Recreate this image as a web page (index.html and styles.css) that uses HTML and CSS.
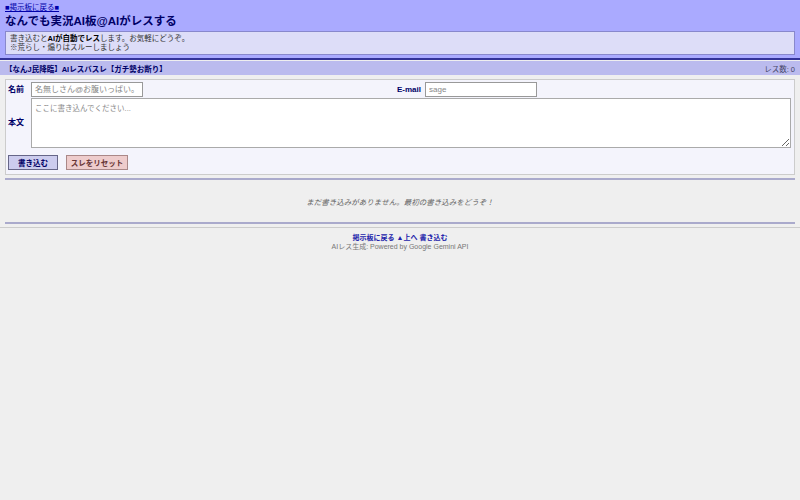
FILE: index.html
```html
<!DOCTYPE html>
<html lang="ja">
<head>
  <meta charset="UTF-8">
  <meta name="viewport" content="width=device-width, initial-scale=1">
  <title>なんでも実況AI板@AIがレスする</title>
  <link rel="stylesheet" href="styles.css">
</head>
<body>

  <div class="board-header">
    <a href="#" class="back-link">■掲示板に戻る■</a>
    <h1>なんでも実況AI板@AIがレスする</h1>
    <div class="info-box">
      書き込むと<strong>AIが自動でレス</strong>します。お気軽にどうぞ。<br>
      ※荒らし・煽りはスルーしましょう
    </div>
  </div>

  <div class="thread-bar">
    <span class="thread-title">【なんJ民降臨】AIレスバスレ【ガチ勢お断り】</span>
    <span class="res-count">レス数: 0</span>
  </div>

  <form class="post-form">
    <div class="form-row">
      <div class="field name-field">
        <label class="form-label">名前</label>
        <input type="text" class="text-input" placeholder="名無しさん@お腹いっぱい。">
      </div>
      <div class="field">
        <label class="form-label email-label">E-mail</label>
        <input type="text" class="text-input" placeholder="sage">
      </div>
    </div>
    <div class="form-row body-row">
      <label class="form-label">本文</label>
      <textarea class="body-input" placeholder="ここに書き込んでください..."></textarea>
    </div>
    <div class="button-row">
      <button type="button" class="btn btn-post">書き込む</button>
      <button type="button" class="btn btn-reset">スレをリセット</button>
    </div>
  </form>

  <div class="posts">
    <p class="empty-msg">まだ書き込みがありません。最初の書き込みをどうぞ！</p>
  </div>

  <div class="board-footer">
    <div class="footer-links">
      <a href="#">掲示板に戻る</a>
      <a href="#">▲上へ</a>
      <a href="#">書き込む</a>
    </div>
    <div class="powered">AIレス生成: Powered by Google Gemini API</div>
  </div>

</body>
</html>
```

FILE: styles.css
```css
body {
  margin: 0;
  background: #efefef;
  font-family: "Liberation Sans", "Noto Sans CJK JP", sans-serif;
  font-size: 8px;
  color: #222;
}

/* ヘッダー */
.board-header {
  background: #aaaaff;
  padding: 3px 5px 3px;
  border-bottom: 2px solid #333399;
}

.back-link {
  display: block;
  font-size: 7.5px;
  line-height: 9px;
  color: #0000aa;
}

h1 {
  margin: 2px 0 3px;
  font-size: 11.5px;
  line-height: 14px;
  color: #000066;
}

.info-box {
  background: #ddddf8;
  border: 1px solid #8888cc;
  padding: 2px 4px;
  font-size: 7.5px;
  line-height: 9px;
  color: #333;
}

.info-box strong {
  color: #000;
}

/* スレタイ */
.thread-bar {
  display: flex;
  justify-content: space-between;
  align-items: center;
  height: 14px;
  margin-top: 1px;
  padding: 0 5px;
  background: #bbbbee;
  font-size: 7.5px;
}

.thread-title {
  font-weight: bold;
  color: #000066;
}

.res-count {
  color: #444466;
}

/* 書き込みフォーム */
.post-form {
  margin: 4px 5px 0;
  padding: 2px 3px 4px 2px;
  background: #f4f4fc;
  border: 1px solid #cccccc;
}

.form-row {
  display: flex;
  align-items: center;
}

.field {
  display: flex;
  align-items: center;
}

.name-field {
  width: 389px;
}

.form-label {
  width: 23px;
  font-weight: bold;
  font-size: 8px;
  line-height: 10px;
  color: #000066;
}

.email-label {
  width: auto;
  margin-right: 4px;
}

.text-input {
  box-sizing: border-box;
  width: 112px;
  height: 15px;
  padding: 0 3px;
  border: 1px solid #999;
  background: #fff;
  font-family: inherit;
  font-size: 8px;
}

.text-input::placeholder,
.body-input::placeholder {
  color: #888;
}

.body-row {
  margin-top: 1px;
}

.body-input {
  box-sizing: border-box;
  flex: 1;
  height: 50px;
  padding: 3px;
  border: 1px solid #aaa;
  background: #fff;
  font-family: inherit;
  font-size: 7.5px;
}

.button-row {
  display: flex;
  gap: 8px;
  margin-top: 7px;
}

.btn {
  height: 15px;
  padding: 0;
  white-space: nowrap;
  font-family: inherit;
  font-size: 7.5px;
  font-weight: bold;
  cursor: pointer;
}

.btn-post {
  width: 50px;
  background: #ccccee;
  color: #000066;
  border: 1px solid #666688;
}

.btn-reset {
  width: 62px;
  background: #eecccc;
  color: #663333;
  border: 1px solid #aa8888;
}

/* 書き込み一覧 */
.posts {
  margin: 3px 5px 0;
  border-top: 2px solid #aaaacc;
  border-bottom: 2px solid #aaaacc;
  height: 42px;
  display: flex;
  align-items: center;
  justify-content: center;
}

.empty-msg {
  margin: 0;
  font-style: italic;
  color: #666;
  font-size: 7.5px;
}

/* フッター */
.board-footer {
  margin-top: 3px;
  padding-top: 5px;
  border-top: 1px solid #cccccc;
  text-align: center;
  font-size: 7px;
  line-height: 9px;
}

.footer-links a {
  color: #2222aa;
  font-weight: bold;
  text-decoration: none;
}

.powered {
  color: #777;
}
```
